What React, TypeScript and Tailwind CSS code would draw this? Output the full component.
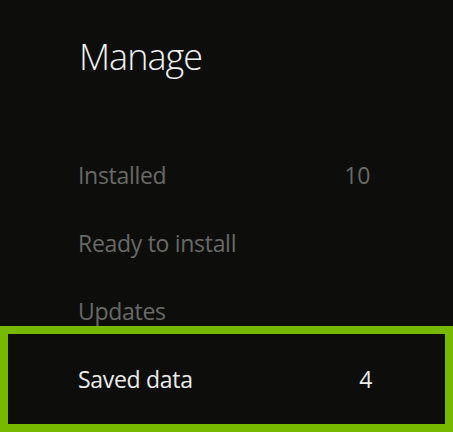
import React from 'react';

interface ManageItem {
  label: string;
  count?: number;
}

const items: ManageItem[] = [
  { label: 'Installed', count: 10 },
  { label: 'Ready to install' },
  { label: 'Updates' },
  { label: 'Saved data', count: 4 },
];

const App: React.FC = () => {
  const focused = 3;

  return (
    <div
      className="w-[453px] h-[432px] overflow-hidden bg-[#0d0e0b]"
      style={{ fontFamily: '"Open Sans", "Noto Sans", sans-serif' }}
    >
      <h1 className="pt-[35px] pl-[79px] text-[36px] leading-[44px] font-light tracking-[-1px] text-[#f2f2f2]">
        Manage
      </h1>

      <ul className="mt-[62px]">
        {items.map((item, i) =>
          i === focused ? (
            <li
              key={item.label}
              className="-mt-[19px] h-[106px] flex items-center justify-between border-8 border-[#77b900] pl-[70px] pr-[73px] text-[23px] tracking-[-0.3px] text-[#ececec]"
            >
              <span>{item.label}</span>
              <span>{item.count}</span>
            </li>
          ) : (
            <li
              key={item.label}
              className="h-[68px] flex items-center justify-between pl-[78px] pr-[83px] text-[23px] tracking-[-0.3px] text-[#696967]"
            >
              <span>{item.label}</span>
              {item.count !== undefined && <span>{item.count}</span>}
            </li>
          )
        )}
      </ul>
    </div>
  );
};

export default App;
